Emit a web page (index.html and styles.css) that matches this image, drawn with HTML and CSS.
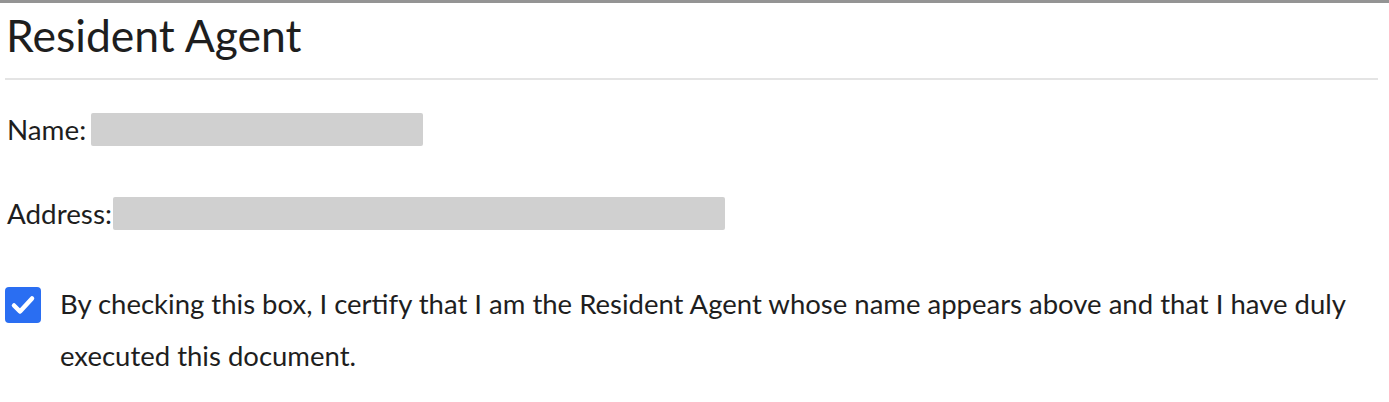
FILE: index.html
```html
<!DOCTYPE html>
<html>
<head>
    <title>Resident Agent</title>
    <link rel="stylesheet" href="styles.css">
</head>
<body>
    <div class="section">
        <h1>Resident Agent</h1>

        <div class="field">
            <span class="label">Name:</span>
            <span class="redacted name-value"></span>
        </div>

        <div class="field">
            <span class="label">Address:</span>
            <span class="redacted address-value"></span>
        </div>

        <label class="certify">
            <span class="check">
                <svg width="28" height="28" viewBox="0 0 28 28">
                    <path d="M5 14.5 L11 20.5 L23 7.5" fill="none" stroke="#fff" stroke-width="4.5" stroke-linecap="round" stroke-linejoin="round"/>
                </svg>
            </span>
            <span class="certify-text">By checking this box, I certify that I am the Resident Agent whose name appears above and that I have duly executed this document.</span>
        </label>
    </div>
</body>
</html>
```

FILE: styles.css
```css
body { margin: 0; font-family: Lato, "Liberation Sans", sans-serif; color: #1e1e1e; background: #fff; }
.section {
    border-top: 3px solid #949494;
    padding: 0 11px 0 5px;
}
h1 {
    font-size: 44.5px;
    font-weight: 400;
    margin: 0;
    padding: 8px 0 19px 1px;
    border-bottom: 2px solid #e4e4e4;
    line-height: 48px;
}
.field { display: flex; align-items: center; margin-top: 33px; height: 33px; }
.field + .field { margin-top: 51px; }
.label { font-size: 27.8px; padding-left: 2px; }
.redacted { display: inline-block; height: 33px; background: #d0d0d0; border-radius: 2px; }
.name-value { width: 332px; margin-left: 5px; }
.address-value { width: 612px; margin-left: 1px; }
.certify { display: flex; align-items: flex-start; margin-top: 57px; }
.check {
    flex: none;
    width: 36px;
    height: 36px;
    background: #2a6ef2;
    border-radius: 4px;
    display: flex;
    align-items: center;
    justify-content: center;
}
.certify-text { font-size: 27.5px; line-height: 52px; margin-top: -9px; margin-left: 19px; max-width: 1300px; }
```
